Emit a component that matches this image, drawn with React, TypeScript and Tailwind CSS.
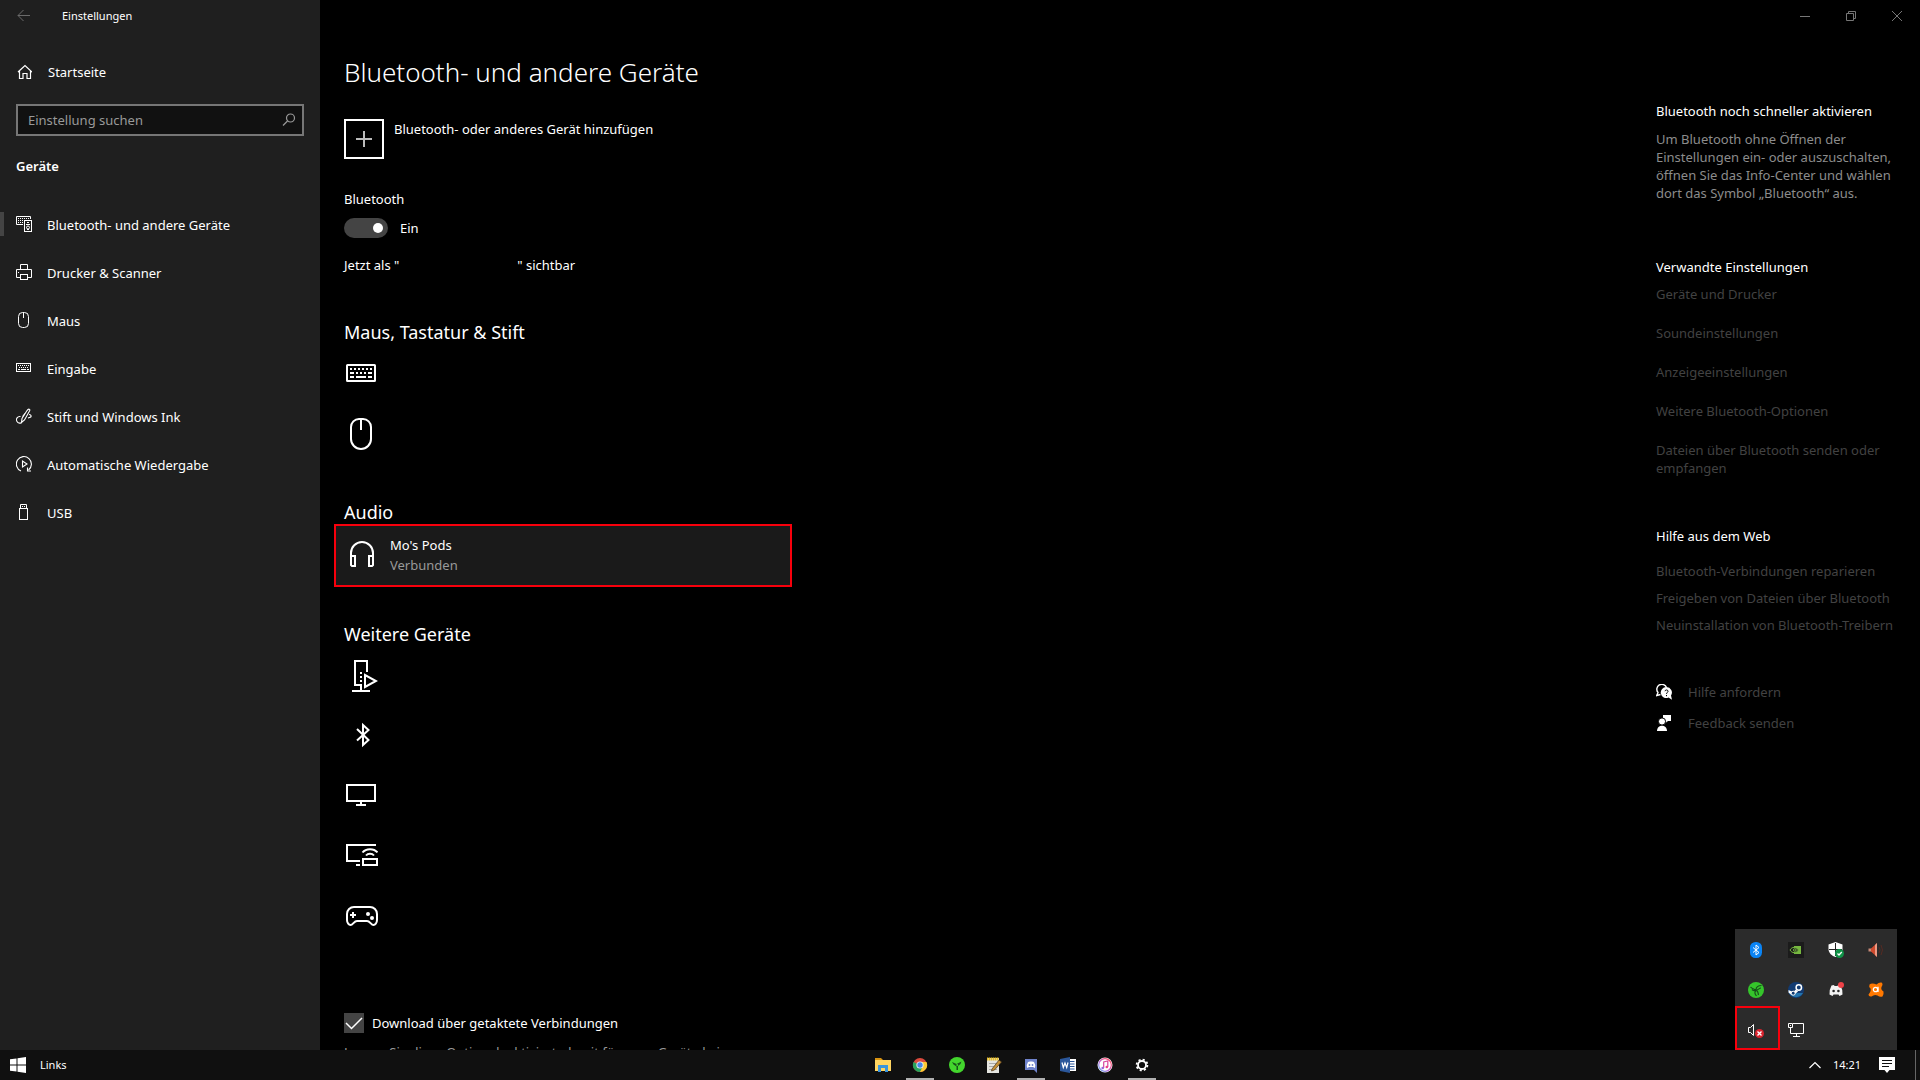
import React, { useState } from 'react';

const BackIcon = () => (
  <svg className="w-4 h-4" viewBox="0 0 16 16" fill="none" stroke="currentColor">
    <path d="M2 7.5H14M7.5 2L2 7.5L7.5 13" />
  </svg>
);

const HomeIcon = () => (
  <svg className="w-4 h-4" viewBox="0 0 16 16" fill="none" stroke="currentColor" strokeWidth="1.2">
    <path d="M2 8L9 1.5L16 8M3.5 7V14.5H7V9.5H11V14.5H14.5V7" />
  </svg>
);

const SearchIcon = () => (
  <svg className="w-4 h-4" viewBox="0 0 16 16" fill="none" stroke="currentColor" strokeWidth="1.2">
    <circle cx="10.5" cy="6" r="4" />
    <path d="M7.5 9L3 13.5" />
  </svg>
);

const DevicesIcon = () => (
  <svg className="w-4 h-4" viewBox="0 0 16 16" fill="none" stroke="currentColor">
    <path d="M7 8.5H0.5V0.5H14.5V3" />
    <path d="M2 2.5H13M2 4.5H7M2 6.5H7" strokeDasharray="1 1" />
    <rect x="8.5" y="4.5" width="7" height="11" />
    <circle cx="12" cy="11.5" r="1.5" />
    <path d="M11 6.5H13M10 8.5H14M11 13.5H13" />
  </svg>
);

const PrinterIcon = () => (
  <svg className="w-4 h-4" viewBox="0 0 16 16" fill="none" stroke="currentColor">
    <path d="M4.5 5V0.5H11.5V5M4 13.5H0.5V5.5H15.5V13.5H12" />
    <rect x="4.5" y="10.5" width="7" height="5" />
    <path d="M2 8.5H3" />
  </svg>
);

const MouseIcon = () => (
  <svg className="w-4 h-4" viewBox="0 0 16 16" fill="none" stroke="currentColor">
    <rect x="2.5" y="0.5" width="10" height="15" rx="4" />
    <path d="M7.5 1V6" />
  </svg>
);

const KeyboardIcon = () => (
  <svg className="w-4 h-4" viewBox="0 0 16 16" fill="none" stroke="currentColor">
    <rect x="0.5" y="3.5" width="14" height="8" />
    <path d="M2 5.5H13M3 7.5H13" strokeDasharray="1 1" />
    <path d="M2 9.5H4M5 9.5H10M11 9.5H13" />
  </svg>
);

const PenIcon = () => (
  <svg className="w-4 h-4" viewBox="0 0 16 16" fill="none" stroke="currentColor" strokeWidth="1.1">
    <path d="M12 1.5C13 0.5 14.5 1.5 13.5 3L8.5 12L5.5 14.5L6 10.5L11 2.5Z" />
    <path d="M9 5.5L6.5 8.5M13 6.5C15.5 6.5 16 9 13.5 9.5L12 10M4.5 8.5C1.5 8 -0.5 11 1 13.5C2 15.5 5 15.5 5.5 14.5" />
  </svg>
);

const AutoplayIcon = () => (
  <svg className="w-4 h-4" viewBox="0 0 16 16" fill="none" stroke="currentColor" strokeWidth="1.1">
    <path d="M5 15A7.5 7.5 0 1 1 12.5 14" />
    <path d="M11.5 11.5V15H15" />
    <path d="M6.5 5V11L11 8Z" />
  </svg>
);

const UsbIcon = () => (
  <svg className="w-4 h-4" viewBox="0 0 16 16" fill="none" stroke="currentColor">
    <path d="M4.5 5V0.5H10.5V5" />
    <rect x="3.5" y="4.5" width="8" height="11" />
    <path d="M6 2.5H7M8 2.5H9" />
  </svg>
);

const LargeKeyboardIcon = () => (
  <svg className="w-8 h-8" viewBox="0 0 32 32" fill="none" stroke="currentColor" strokeWidth="2">
    <rect x="1" y="7" width="28" height="16" rx="0.5" />
    <path d="M4 11H26" strokeDasharray="2 2" />
    <path d="M4 15H8M10 15H12M14 15H16M18 15H20M22 15H26M4 19H8M10 19H20M22 19H26" />
  </svg>
);

const LargeMouseIcon = () => (
  <svg className="w-8 h-8" viewBox="0 0 32 32" fill="none" stroke="currentColor" strokeWidth="2">
    <path d="M5 9A8 8 0 0 1 13 1H17A8 8 0 0 1 25 9V21A10 10 0 0 1 5 21Z" />
    <path d="M15 1V12" />
  </svg>
);

const HeadphonesIcon = () => (
  <svg className="w-8 h-8" viewBox="0 0 32 32" fill="none" stroke="currentColor" strokeWidth="2">
    <path d="M5 24V13A11 11 0 0 1 27 13V24" />
    <path d="M5 16H9V26H6L5 25ZM27 16H23V26H26L27 25Z" />
  </svg>
);

const MediaServerIcon = () => (
  <svg className="w-8 h-8" viewBox="0 0 32 32" fill="none" stroke="currentColor" strokeWidth="2">
    <path d="M21 12V1H9V25H15V30M6 31H24" />
    <path d="M15 12V22" strokeDasharray="2 2" />
    <path d="M19 15V27L30 21Z" />
  </svg>
);

const BluetoothIcon = () => (
  <svg className="w-8 h-8" viewBox="0 0 32 32" fill="none" stroke="currentColor" strokeWidth="2">
    <path d="M11 9L22.5 20L17 25V5L22.5 10L11 20.5" />
  </svg>
);

const MonitorIcon = () => (
  <svg className="w-8 h-8" viewBox="0 0 32 32" fill="none" stroke="currentColor" strokeWidth="2">
    <rect x="1" y="5" width="28" height="16" />
    <path d="M15 22V25M10 25H20" />
  </svg>
);

const CastIcon = () => (
  <svg className="w-8 h-8" viewBox="0 0 32 32" fill="none" stroke="currentColor" strokeWidth="2">
    <path d="M30 5H1V21H14M10 25H14" />
    <rect x="17" y="19" width="14" height="6" />
    <path d="M16.5 12.5C20 8 28 8 31.5 12.5M20 15.5C22 13 26 13 28 15.5" />
  </svg>
);

const GamepadIcon = () => (
  <svg className="w-8 h-8" viewBox="0 0 32 32" fill="none" stroke="currentColor" strokeWidth="2">
    <path d="M8 7H24A7 7 0 0 1 31 14V20C31 23 29 25 27.5 25C25 25 24 21 21 21H11C8 21 7 25 4.5 25C3 25 1 23 1 20V14A7 7 0 0 1 8 7Z" />
    <path d="M7 12V18M4 15H10" />
    <circle cx="22" cy="14" r="2" fill="currentColor" stroke="none" />
    <circle cx="26" cy="18" r="2" fill="currentColor" stroke="none" />
  </svg>
);

const HelpIcon = () => (
  <svg className="w-4 h-4" viewBox="0 0 16 16">
    <path d="M10.5 3.5A5 5 0 1 0 2 8.5L0.8 11.5L4.5 10.5" fill="none" stroke="#fff" strokeWidth="1.4" />
    <path d="M10.5 3A5.5 5.5 0 1 0 12.500 13.5L16 15.8L15 11.5A5.5 5.5 0 0 0 10.5 3Z" fill="#fff" />
    <path d="M9 7.2C9 5.5 12 5.5 12 7.2C12 8.5 10.5 8.5 10.5 10M10.5 11V12.2" fill="none" stroke="#000" />
  </svg>
);

const FeedbackIcon = () => (
  <svg className="w-4 h-4" viewBox="0 0 16 16" fill="#fff">
    <path d="M7 0H15V6H12L9.5 8V6H7Z" />
    <circle cx="6" cy="6.5" r="3.6" stroke="#000" />
    <path d="M1 16C1 9 11 9 11 16Z" />
  </svg>
);

const BluetoothTrayIcon = () => (
  <svg className="w-4 h-4" viewBox="0 0 16 16">
    <rect x="2" width="12" height="16" rx="5.5" fill="#0a84f5" />
    <path d="M5 5.5L11 10.5L8 13V3L11 5.5L5 10.5" fill="none" stroke="#fff" />
  </svg>
);

const NvidiaIcon = () => (
  <svg className="w-4 h-4" viewBox="0 0 16 16">
    <rect width="16" height="16" fill="#1b1b1b" />
    <path d="M6 4H13V12H6Z" fill="#76b83f" />
    <path d="M2 8C4 4.5 8 4.5 10.5 8C8 11.5 4 11.5 2 8Z" fill="#1b1b1b" stroke="#76b83f" />
    <circle cx="6.8" cy="8" r="1.3" fill="none" stroke="#76b83f" />
  </svg>
);

const DefenderIcon = () => (
  <svg className="w-4 h-4" viewBox="0 0 16 16">
    <path d="M7.5 0L14.5 2.5V7C14.5 11 11 14 7.5 15C4 14 0.5 11 0.5 7V2.5Z" fill="#fff" />
    <path d="M7.5 1V14M1 7.5H14" stroke="#222" />
    <circle cx="11.5" cy="11.5" r="4.5" fill="#0f9347" />
    <path d="M9.5 11.5L11 13L13.8 10" fill="none" stroke="#fff" strokeWidth="1.3" />
  </svg>
);

const SoundManagerIcon = () => (
  <svg className="w-4 h-4" viewBox="0 0 16 16">
    <path d="M0.5 6.5H4V9.5H0.5Z" fill="#c98a78" />
    <path d="M3 6.5L9 1V15L3 9.5Z" fill="#cf4a2e" />
    <path d="M7 3L9 1V15L7 13Z" fill="#ea9a84" />
    <path d="M11 5Q13 8 11 11M13 3Q16 8 13 13" fill="none" stroke="#552a22" />
  </svg>
);

const RazerIcon = () => (
  <svg className="w-4 h-4" viewBox="0 0 16 16">
    <circle cx="8" cy="8" r="8" fill="#35c52b" />
    <g fill="none" stroke="#17501a" strokeWidth="1.2">
      <path d="M2.5 5C4 7 6 7 8 8C8 5.500 10 3.500 13.5 3.5" />
      <path d="M4 7.5C5.500 9 7 8.500 8 8.500C10 8 11.500 6 13 6" />
      <path d="M8 8.500C6 10 7 12 8.500 14M8.500 8.500C10.500 9.500 10 11.500 10.500 13" />
    </g>
  </svg>
);

const SteamIcon = () => (
  <svg className="w-4 h-4" viewBox="0 0 16 16">
    <circle cx="8" cy="8" r="8" fill="#123b72" />
    <path d="M1 11A8 8 0 0 0 15 11Z" fill="#2374ad" />
    <path d="M0.5 8L5 10L8 7.5L10 9.5L7 12L3 12.5L0.5 10.5Z" fill="#fff" />
    <circle cx="10.8" cy="5.5" r="2.7" fill="#123b72" stroke="#fff" strokeWidth="1.5" />
    <circle cx="5.2" cy="11.2" r="2" fill="#123b72" stroke="#fff" />
  </svg>
);

const DiscordTrayIcon = () => (
  <svg className="w-4 h-4" viewBox="0 0 16 16">
    <path d="M3.5 3.5L6 3L6.5 4H9.5L10 3L12.5 3.5Q15 8 14.5 12.5L11.5 14L10.5 12.5H5.5L4.5 14L1.5 12.5Q1 8 3.5 3.5Z" fill="#f3f3f3" />
    <circle cx="5.6" cy="9" r="1.3" fill="#2b2b2b" />
    <circle cx="10.4" cy="9" r="1.3" fill="#2b2b2b" />
    <circle cx="13" cy="3" r="3" fill="#ee4248" />
  </svg>
);

const AvastIcon = () => (
  <svg className="w-4 h-4" viewBox="0 0 16 16">
    <path d="M1.5 2.5Q4 0.500 8.5 2.5Q11 0 13.5 0.5Q15.500 2 13.5 5Q12.500 7.500 15.5 9.500Q16 12 14.5 14.5Q12 15.500 9.5 13.500Q6.500 12 3.5 14.5Q0.500 15 0.500 12.500Q3.500 9 2.5 6.500Q0.500 4.500 1.5 2.5Z" fill="#ff7800" />
    <circle cx="7.5" cy="7.5" r="2.2" fill="none" stroke="#fff" strokeWidth="1.3" />
    <path d="M10 4.8V10" stroke="#fff" strokeWidth="1.3" />
  </svg>
);

const MutedIcon = () => (
  <svg className="w-4 h-4" viewBox="0 0 16 16">
    <path d="M0.5 5.5H2.5L5.5 2.5V13.5L2.5 10.5H0.5Z" fill="none" stroke="#fff" />
    <circle cx="11.5" cy="11.5" r="4.5" fill="#d9232e" />
    <path d="M9.5 9.5L13.5 13.5M13.5 9.5L9.5 13.5" stroke="#fff" strokeWidth="1.3" />
  </svg>
);

const NetworkIcon = () => (
  <svg className="w-4 h-4" viewBox="0 0 16 16" fill="none" stroke="#fff">
    <path d="M5 1.5H15.5V11.5H2.5V5M8.5 12V14M5 14.5H12" />
    <path d="M0.5 1.5H4.5V5.5H0.5ZM2 3.5H3" />
  </svg>
);

const WindowsIcon = () => (
  <svg className="w-4 h-4" viewBox="0 0 16 16" fill="#fff">
    <path d="M0 2.3L6.5 1.4V7.5H0ZM7.5 1.2L16 0V7.5H7.5ZM0 8.5H6.5V14.6L0 13.7ZM7.5 8.5H16V16L7.5 14.8Z" />
  </svg>
);

const ExplorerIcon = () => (
  <svg className="w-4 h-4" viewBox="0 0 16 16">
    <path d="M0 1H6L8 3H0Z" fill="#d99411" />
    <rect y="3" width="16" height="11" fill="#ffd561" />
    <path d="M3 8H13V15H10V11H6V15H3Z" fill="#3a95dc" />
  </svg>
);

const ChromeIcon = () => (
  <svg className="w-4 h-4" viewBox="0 0 16 16">
    <circle cx="8" cy="8" r="7" fill="#dc4a3d" />
    <path d="M8 8L1.5 5A7 7 0 0 0 8 15L11.5 9Z" fill="#27a35a" />
    <path d="M8 15A7 7 0 0 0 14.5 5H8L11 9Z" fill="#fcc934" />
    <circle cx="8" cy="8" r="3.600" fill="#eee" />
    <circle cx="8" cy="8" r="2.700" fill="#4688e8" />
  </svg>
);

const CortexIcon = () => (
  <svg className="w-4 h-4" viewBox="0 0 16 16">
    <circle cx="8" cy="8" r="8" fill="#43d62d" />
    <path d="M3 5L7.5 7L12.5 4.500L11.500 7L9 9V13H7.500V9.500L4.500 7.5Z" fill="#185319" />
    <circle cx="8.200" cy="8" r="0.900" fill="#43d62d" />
  </svg>
);

const NotepadIcon = () => (
  <svg className="w-4 h-4" viewBox="0 0 16 16">
    <rect x="1" y="1" width="12" height="15" fill="#e5e5e0" />
    <path d="M3 6.5H11M3 9.5H11M3 12.5H11" stroke="#aaa" />
    <path d="M1 2H13" stroke="#e8bd27" strokeWidth="3" strokeDasharray="1.5 0.5" />
    <path d="M6 12L13 3L15.5 5L8.5 13L5.5 14Z" fill="#c69238" stroke="#49351c" strokeWidth="0.7" />
  </svg>
);

const DiscordIcon = () => (
  <svg className="w-4 h-4" viewBox="0 0 16 16">
    <path d="M2 2H14V16L11 13H2Z" fill="#6f83cc" />
    <path d="M5 5L7 4.5H9L11 5Q13 8 12 11L10 10H6L4 11Q3 8 5 5Z" fill="#fff" />
    <circle cx="6.5" cy="8" r="0.9" fill="#6f83cc" />
    <circle cx="9.5" cy="8" r="0.9" fill="#6f83cc" />
  </svg>
);

const WordIcon = () => (
  <svg className="w-4 h-4" viewBox="0 0 16 16">
    <rect x="8" y="2" width="8" height="12" fill="#fff" />
    <path d="M10 4.5H14.5M10 7H14.5M10 9.5H14.5M10 12H14.5" stroke="#2b579a" />
    <path d="M0 2L10 0V16L0 14Z" fill="#2b579a" />
    <path d="M2 5.5L3.3 10.5L5 6L6.7 10.5L8 5.5" fill="none" stroke="#fff" strokeWidth="1.2" />
  </svg>
);

const ItunesIcon = () => (
  <svg className="w-4 h-4" viewBox="0 0 16 16">
    <defs>
      <linearGradient id="itunes" x1="1" y1="0" x2="0" y2="1">
        <stop offset="0.2" stopColor="#f84f73" />
        <stop offset="0.6" stopColor="#b866dc" />
        <stop offset="1" stopColor="#59b9f2" />
      </linearGradient>
    </defs>
    <circle cx="8" cy="8" r="7.5" fill="#fff" />
    <circle cx="8" cy="8" r="6.3" fill="none" stroke="url(#itunes)" strokeWidth="1.2" />
    <path d="M6.7 11V5L10.8 4V10" fill="none" stroke="#d8469d" strokeWidth="1.2" />
    <circle cx="5.7" cy="11" r="1.3" fill="#9568dc" />
    <circle cx="9.8" cy="10" r="1.3" fill="#ec4388" />
  </svg>
);

const GearIcon = () => (
  <svg className="w-4 h-4" viewBox="0 0 16 16" fill="none" stroke="#fff">
    <circle cx="8" cy="8" r="4" strokeWidth="1.8" />
    <circle cx="8" cy="8" r="5.4" strokeWidth="1.8" strokeDasharray="2.12 2.12" />
  </svg>
);

const NAV_ITEMS = [
  { label: 'Bluetooth- und andere Geräte', icon: <DevicesIcon /> },
  { label: 'Drucker & Scanner', icon: <PrinterIcon /> },
  { label: 'Maus', icon: <MouseIcon /> },
  { label: 'Eingabe', icon: <KeyboardIcon /> },
  { label: 'Stift und Windows Ink', icon: <PenIcon /> },
  { label: 'Automatische Wiedergabe', icon: <AutoplayIcon /> },
  { label: 'USB', icon: <UsbIcon /> },
];

const RELATED_LINKS = [
  'Geräte und Drucker',
  'Soundeinstellungen',
  'Anzeigeeinstellungen',
  'Weitere Bluetooth-Optionen',
  'Dateien über Bluetooth senden oder empfangen',
];

const WEB_LINKS = [
  'Bluetooth-Verbindungen reparieren',
  'Freigeben von Dateien über Bluetooth',
  'Neuinstallation von Bluetooth-Treibern',
];

const OTHER_DEVICES = [
  { name: 'Medienserver', icon: <MediaServerIcon /> },
  { name: 'Bluetooth-Gerät', icon: <BluetoothIcon /> },
  { name: 'Monitor', icon: <MonitorIcon /> },
  { name: 'Drahtlose Anzeige', icon: <CastIcon /> },
  { name: 'Gamecontroller', icon: <GamepadIcon /> },
];

const TASKBAR_APPS = [
  { name: 'Explorer', icon: <ExplorerIcon />, open: false },
  { name: 'Chrome', icon: <ChromeIcon />, open: true },
  { name: 'Razer Cortex', icon: <CortexIcon />, open: false },
  { name: 'Editor', icon: <NotepadIcon />, open: false },
  { name: 'Discord', icon: <DiscordIcon />, open: true },
  { name: 'Word', icon: <WordIcon />, open: false },
  { name: 'iTunes', icon: <ItunesIcon />, open: false },
  { name: 'Einstellungen', icon: <GearIcon />, open: true },
];

const TRAY_APPS = [
  { name: 'Bluetooth', icon: <BluetoothTrayIcon /> },
  { name: 'NVIDIA', icon: <NvidiaIcon /> },
  { name: 'Windows-Sicherheit', icon: <DefenderIcon /> },
  { name: 'Audio-Manager', icon: <SoundManagerIcon /> },
  { name: 'Razer', icon: <RazerIcon /> },
  { name: 'Steam', icon: <SteamIcon /> },
  { name: 'Discord', icon: <DiscordTrayIcon /> },
  { name: 'Avast', icon: <AvastIcon /> },
  { name: 'Lautsprecher', icon: <MutedIcon />, marked: true },
  { name: 'Netzwerk', icon: <NetworkIcon /> },
];

const Sidebar = () => {
  const [query, setQuery] = useState('');

  return (
    <aside className="w-80 shrink-0 bg-[#1f1f1f]">
      <div className="flex h-8 items-center gap-[30px] pl-4">
        <button aria-label="Zurück" className="text-[#6b6b6b]">
          <BackIcon />
        </button>
        <span className="text-[11px]">Einstellungen</span>
      </div>

      <a href="#start" className="mt-5 flex h-10 items-center gap-4 pl-4">
        <HomeIcon />
        Startseite
      </a>

      <div className="mx-4 mt-3 flex h-8 items-center border-2 border-[#767676] bg-[#111] px-[10px] text-[#999]">
        <input
          type="text"
          aria-label="Einstellung suchen"
          placeholder="Einstellung suchen"
          value={query}
          onChange={e => setQuery(e.target.value)}
          className="h-5 min-w-0 flex-1 bg-transparent outline-none placeholder:text-[#999]"
        />
        <button aria-label="Suchen" className="-mr-1">
          <SearchIcon />
        </button>
      </div>

      <h2 className="mt-5 pl-4 font-semibold">Geräte</h2>

      <nav className="mt-6">
        {NAV_ITEMS.map((item, i) => (
          <a key={item.label} href="#geraete" className="flex h-12 items-center">
            <span className={i === 0 ? 'h-6 w-1 bg-[#444]' : 'h-6 w-1'} />
            <span className="ml-3 mr-[15px]">{item.icon}</span>
            <span className="pt-px">{item.label}</span>
          </a>
        ))}
      </nav>
    </aside>
  );
};

const DeviceRow = ({ name, icon }: { name: string; icon: React.ReactNode }) => (
  <button aria-label={name} className="flex h-[60px] w-full items-center px-3">
    {icon}
  </button>
);

const Devices = () => {
  const [enabled, setEnabled] = useState(true);
  const [metered, setMetered] = useState(true);

  return (
    <main className="min-w-0 flex-1 pl-6">
      <h1 className="mt-5 text-[26px] font-light leading-10">
        Bluetooth- und andere Geräte
      </h1>

      <button className="mt-[27px] flex items-start gap-[10px]">
        <span className="flex h-10 w-10 items-center justify-center border-2 border-white">
          <svg className="h-4 w-4" viewBox="0 0 16 16" stroke="#bbb" strokeWidth="2">
            <path d="M0 8H16M8 0V16" />
          </svg>
        </span>
        Bluetooth- oder anderes Gerät hinzufügen
      </button>

      <div className="mt-[30px]">Bluetooth</div>
      <label className="mt-[9px] flex items-center gap-3">
        <input
          type="checkbox"
          role="switch"
          aria-label="Bluetooth"
          checked={enabled}
          onChange={e => setEnabled(e.target.checked)}
          className="flex h-5 w-11 appearance-none items-center rounded-full bg-[#444] px-[5px] before:h-[10px] before:w-[10px] before:rounded-full before:bg-white checked:justify-end"
        />
        {enabled ? 'Ein' : 'Aus'}
      </label>
      <p className="mt-[17px] flex">
        <span>Jetzt als "</span>
        <span className="ml-[118px]">" sichtbar</span>
      </p>

      <div className="-ml-[10px] max-w-[458px]">
        <h2 className="mt-[45px] pl-[10px] text-lg leading-6">Maus, Tastatur & Stift</h2>
        <DeviceRow name="Tastatur" icon={<LargeKeyboardIcon />} />
        <DeviceRow name="Maus" icon={<LargeMouseIcon />} />

        <h2 className="mt-9 pl-[10px] text-lg leading-6">Audio</h2>
        <button className="flex h-[63px] w-full items-center gap-3 border-2 border-[#f8000c] bg-[#1a1a1a] px-[10px] text-left">
          <HeadphonesIcon />
          <span className="pb-px">
            <span className="block">Mo's Pods</span>
            <span className="block text-[#999]">Verbunden</span>
          </span>
        </button>

        <h2 className="mt-[35px] pl-[10px] text-lg leading-6">Weitere Geräte</h2>
        {OTHER_DEVICES.map(device => (
          <DeviceRow key={device.name} name={device.name} icon={device.icon} />
        ))}
      </div>

      <label className="mt-[67px] flex items-center gap-2">
        <span className="grid h-5 w-5">
          <input
            type="checkbox"
            checked={metered}
            onChange={e => setMetered(e.target.checked)}
            className="peer col-start-1 row-start-1 h-5 w-5 appearance-none bg-[#444]"
          />
          <svg
            className="pointer-events-none invisible col-start-1 row-start-1 h-5 w-5 peer-checked:visible"
            viewBox="0 0 20 20"
            fill="none"
            stroke="#fff"
            strokeWidth="1.5"
          >
            <path d="M2 10L7.5 15.5L18 5" />
          </svg>
        </span>
        Download über getaktete Verbindungen
      </label>
      <p className="mt-[9px] w-[400px] text-[#999]">
        Lassen Sie diese Option deaktiviert, damit für neue Geräte keine
      </p>
    </main>
  );
};

const InfoPanel = () => (
  <aside className="w-[264px] shrink-0 pr-5 pt-[69px]">
    <h3>Bluetooth noch schneller aktivieren</h3>
    <p className="mt-[9px] leading-[18px] text-[#8c8c8c]">
      Um Bluetooth ohne Öffnen der Einstellungen ein- oder auszuschalten,
      öffnen Sie das Info-Center und wählen dort das Symbol „Bluetooth“ aus.
    </p>

    <h3 className="mt-[55px]">Verwandte Einstellungen</h3>
    <ul className="mt-2 space-y-[21px] leading-[18px] text-[#424242]">
      {RELATED_LINKS.map(link => (
        <li key={link}>
          <a href="#verwandt">{link}</a>
        </li>
      ))}
    </ul>

    <h3 className="mt-[49px]">Hilfe aus dem Web</h3>
    <ul className="mt-4 space-y-[9px] leading-[18px] text-[#424242]">
      {WEB_LINKS.map(link => (
        <li key={link} className="whitespace-nowrap">
          <a href="#hilfe">{link}</a>
        </li>
      ))}
    </ul>

    <div className="mt-12 space-y-[11px] text-[#424242]">
      <a href="#anfordern" className="flex items-center gap-4">
        <HelpIcon />
        Hilfe anfordern
      </a>
      <a href="#feedback" className="flex items-center gap-4">
        <FeedbackIcon />
        Feedback senden
      </a>
    </div>
  </aside>
);

const WindowControls = () => (
  <div className="flex h-8 justify-end text-[#777]">
    <button aria-label="Minimieren" className="flex w-[46px] items-center justify-center">
      <svg className="h-3 w-3" viewBox="0 0 12 12" fill="none" stroke="currentColor">
        <path d="M1 6.5H11" />
      </svg>
    </button>
    <button aria-label="Verkleinern" className="flex w-[46px] items-center justify-center">
      <svg className="h-3 w-3" viewBox="0 0 12 12" fill="none" stroke="currentColor">
        <path d="M1.5 3.5H8.5V10.5H1.5ZM3.5 3.5V1.5H10.5V8.5H8.5" />
      </svg>
    </button>
    <button aria-label="Schließen" className="flex w-[46px] items-center justify-center">
      <svg className="h-3 w-3" viewBox="0 0 12 12" fill="none" stroke="currentColor">
        <path d="M1 1L11 11M11 1L1 11" />
      </svg>
    </button>
  </div>
);

const TrayPopup = () => (
  <div className="absolute bottom-[30px] right-[23px] grid w-[162px] grid-cols-4 bg-[#2b2b2b] px-px pt-px">
    {TRAY_APPS.map(app => (
      <button
        key={app.name}
        aria-label={app.name}
        className="relative flex h-10 items-center justify-center"
      >
        {app.icon}
        {app.marked && (
          <span className="absolute -left-px -top-1 bottom-0 w-[45px] border-2 border-[#f8000c]" />
        )}
      </button>
    ))}
  </div>
);

const Taskbar = () => (
  <footer className="grid h-[30px] shrink-0 grid-cols-[1fr_auto_1fr] bg-[#101010] text-[11px]">
    <div className="flex items-center gap-[14px] pl-[10px]">
      <button aria-label="Start">
        <WindowsIcon />
      </button>
      <span>Links</span>
    </div>

    <div className="ml-[105px] flex gap-[9px]">
      {TASKBAR_APPS.map(app => (
        <button
          key={app.name}
          aria-label={app.name}
          className={
            app.open
              ? 'flex w-7 items-center justify-center border-b-2 border-[#b0b0b0] pt-[2px]'
              : 'flex w-7 items-center justify-center'
          }
        >
          {app.icon}
        </button>
      ))}
    </div>

    <div className="flex items-center justify-end">
      <button aria-label="Ausgeblendete Symbole" className="mr-3">
        <svg className="h-3 w-3" viewBox="0 0 12 12" fill="none" stroke="#fff" strokeWidth="1.2">
          <path d="M0.5 9L6 3.5L11.5 9" />
        </svg>
      </button>
      <time>14:21</time>
      <button aria-label="Info-Center" className="ml-[18px] mr-5">
        <svg className="h-4 w-4" viewBox="0 0 16 16">
          <path d="M0 0H16V13H10.5L8 16L5.5 13H0Z" fill="#fff" />
          <path d="M3 3.5H13M3 6.5H13M3 9.5H10" stroke="#101010" />
        </svg>
      </button>
      <span className="mr-1 h-full w-px bg-[#666]" />
    </div>
  </footer>
);

const App = (): React.ReactElement => {
  return (
    <div className="relative flex h-screen flex-col overflow-hidden bg-black font-['Noto_Sans','Open_Sans',sans-serif] text-[13px] leading-5 text-white">
      <div className="flex min-h-0 flex-1">
        <Sidebar />
        <div className="flex min-w-0 flex-1 flex-col overflow-hidden">
          <WindowControls />
          <div className="flex min-h-0 flex-1">
            <Devices />
            <InfoPanel />
          </div>
        </div>
      </div>
      <Taskbar />
      <TrayPopup />
    </div>
  );
};

export default App;
